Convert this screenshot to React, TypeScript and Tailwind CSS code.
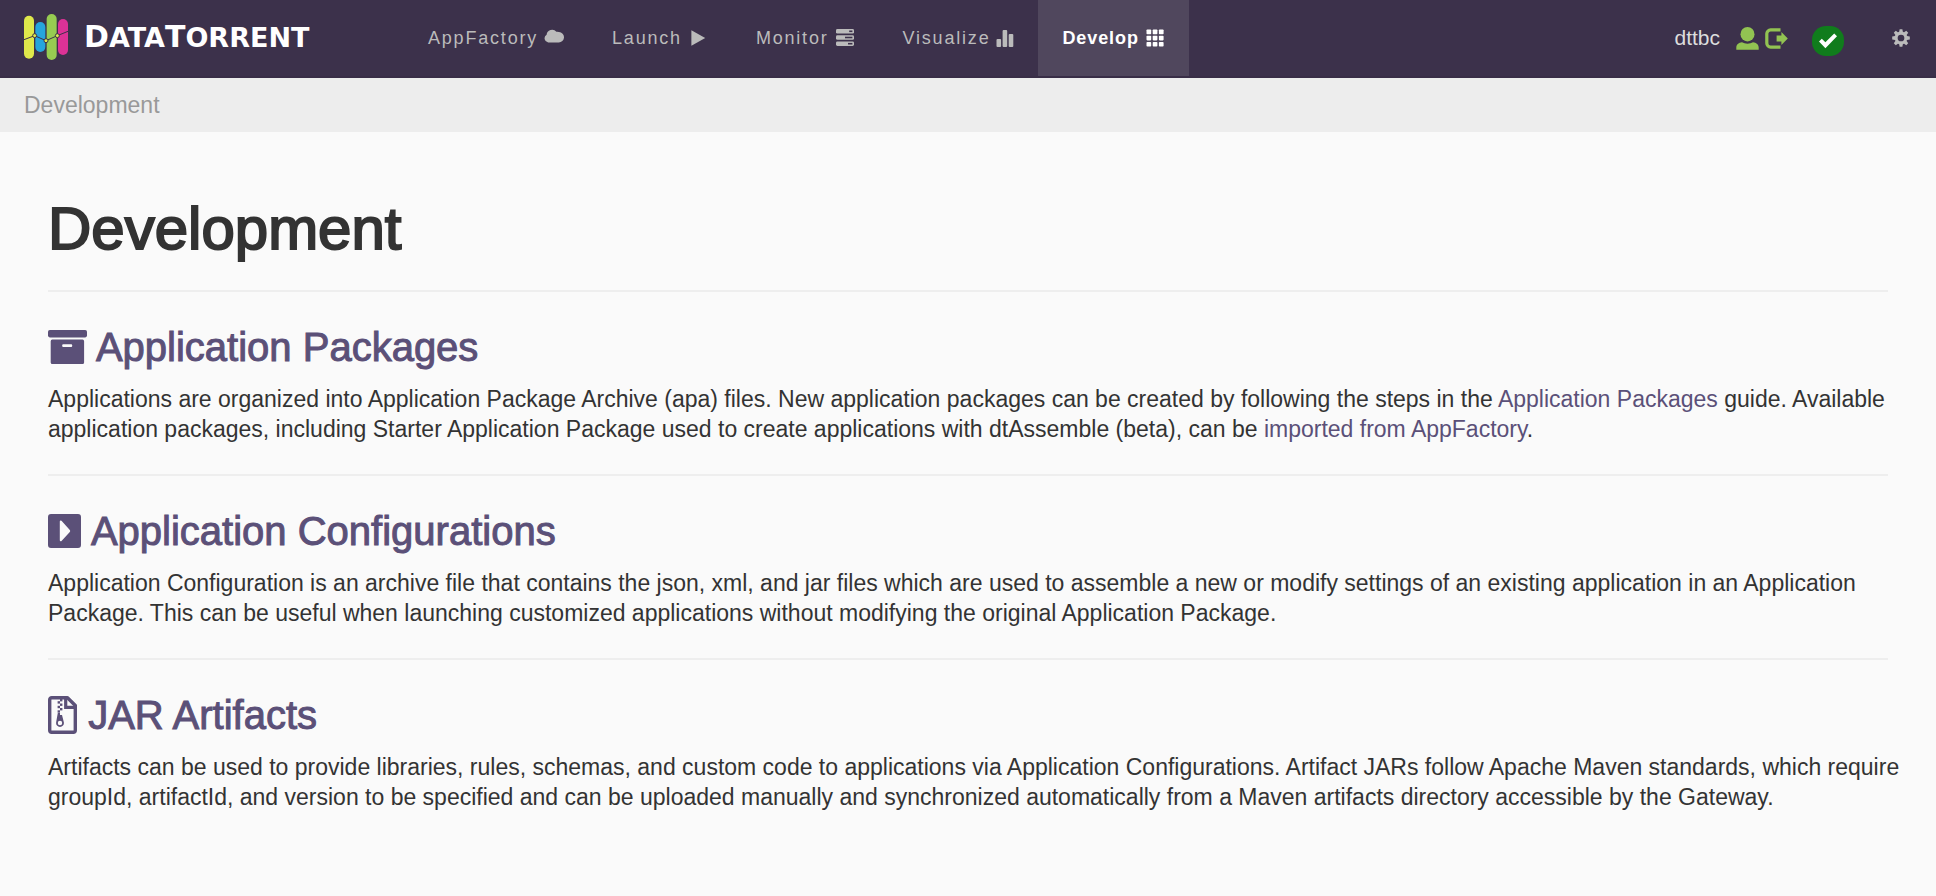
import type { ReactNode } from "react";

function LogoMark() {
  return (
    <svg viewBox="0 0 132 138" className="h-[46px] w-11 shrink-0" aria-hidden="true">
      <rect x="0" y="5" width="30" height="129" rx="15" fill="#dfe84b" />
      <rect x="34" y="24" width="30" height="90" rx="15" fill="#26a5dc" />
      <rect x="68" y="0" width="30" height="138" rx="15" fill="#97cc51" />
      <rect x="102" y="15" width="30" height="108" rx="15" fill="#dc3296" />
      <path d="M0 77 L32 65 L66 80 L100 65 L132 52" fill="none" stroke="#3c314b" strokeWidth="3" />
      <g fill="#dfe84b" stroke="#3c314b" strokeWidth="3">
        <circle cx="32" cy="65" r="6" />
        <circle cx="66" cy="80" r="6" />
        <circle cx="100" cy="65" r="6" />
      </g>
    </svg>
  );
}

function CloudIcon() {
  return (
    <svg viewBox="0 0 20 18" className="h-[18px] w-5" fill="currentColor" aria-hidden="true">
      <path d="M4.2 13.4A4.1 4.1 0 0 1 2.6 5.8A5.6 5.6 0 0 1 12.4 2.7A5.2 5.2 0 0 1 15 3A5.2 5.2 0 0 1 14.6 13.4Z" />
    </svg>
  );
}

function PlayIcon() {
  return (
    <svg viewBox="0 0 20 18" className="h-[18px] w-5" fill="currentColor" aria-hidden="true">
      <path d="M3.4 1.2 L17.2 9 L3.4 16.8Z" />
    </svg>
  );
}

function ServersIcon() {
  return (
    <svg viewBox="0 0 20 18" className="h-[18px] w-5" aria-hidden="true">
      <g fill="currentColor">
        <rect x="1" y="0" width="18" height="4.6" rx="1.4" />
        <rect x="1" y="6.2" width="18" height="4.6" rx="1.4" />
        <rect x="1" y="12.4" width="18" height="4.6" rx="1.4" />
      </g>
      <g fill="#3c314b">
        <rect x="14.2" y="1.5" width="3.2" height="1.6" />
        <rect x="10" y="7.7" width="7.4" height="1.6" />
        <rect x="13" y="13.9" width="4.4" height="1.6" />
      </g>
    </svg>
  );
}

function BarsIcon() {
  return (
    <svg viewBox="1 0 18 18" className="h-[18px] w-[18px]" fill="currentColor" aria-hidden="true">
      <rect x="1.5" y="10" width="4.6" height="8" rx="1" />
      <rect x="7.6" y="1" width="4.6" height="17" rx="1" />
      <rect x="13.7" y="5" width="4.6" height="13" rx="1" />
    </svg>
  );
}

function GridIcon() {
  const steps = [0.5, 6.7, 12.9];
  return (
    <svg viewBox="0 0 20 18" className="h-[18px] w-5" fill="currentColor" aria-hidden="true">
      {steps.map((y) =>
        steps.map((x) => <rect key={`${x}-${y}`} x={x + 1} y={y} width="4.7" height="4.7" rx="0.8" />),
      )}
    </svg>
  );
}

function UserIcon() {
  return (
    <svg viewBox="0 0 23 23" className="h-[23px] w-[23px]" fill="currentColor" aria-hidden="true">
      <ellipse cx="11.5" cy="7.2" rx="7" ry="7.2" />
      <path d="M0.3 22.8V20.5C0.3 17.6 2.8 15.6 6 15.3C9 17.2 14 17.2 17 15.3C20.2 15.6 22.7 17.6 22.7 20.5V22.8Z" />
    </svg>
  );
}

function SignOutIcon() {
  return (
    <svg viewBox="0 0 23 21" className="h-[21px] w-[23px]" aria-hidden="true">
      <path d="M15.5 1.9H5.6A3.8 3.8 0 0 0 1.8 5.7V15.3A3.8 3.8 0 0 0 5.6 19.1H15.5" fill="none" stroke="currentColor" strokeWidth="3.2" />
      <path d="M11.6 7.6H16.4V4L22.8 10.5L16.4 17V13.4H11.6Z" fill="currentColor" />
    </svg>
  );
}

function CogIcon() {
  return (
    <svg viewBox="0 0 18 18" className="h-[18px] w-[18px]" aria-hidden="true">
      <circle cx="9" cy="9" r="4.9" fill="none" stroke="currentColor" strokeWidth="3.1" />
      <g fill="currentColor">
        {[0, 45, 90, 135].map((angle) => (
          <g key={angle} transform={`rotate(${angle} 9 9)`}>
            <path d="M7.6 0.2H10.4L10.9 3.2H7.1Z" />
            <path d="M7.6 17.8H10.4L10.9 14.8H7.1Z" />
          </g>
        ))}
      </g>
    </svg>
  );
}

function ArchiveIcon() {
  return (
    <svg viewBox="0 0 39 34" className="inline-block h-[34px] w-[39px] align-[-3px]" fill="currentColor" aria-hidden="true">
      <rect x="0" y="0" width="39" height="7.4" rx="1.8" />
      <path
        fillRule="evenodd"
        d="M4.3 9.6H34.5A1.6 1.6 0 0 1 36.1 11.2V32.4A1.6 1.6 0 0 1 34.5 34H4.3A1.6 1.6 0 0 1 2.7 32.4V11.2A1.6 1.6 0 0 1 4.3 9.6ZM15.2 14.3A1 1 0 0 0 14.2 15.3V15.9A1 1 0 0 0 15.2 16.9H23.2A1 1 0 0 0 24.2 15.9V15.3A1 1 0 0 0 23.2 14.3Z"
      />
    </svg>
  );
}

function CaretSquareIcon() {
  return (
    <svg viewBox="0 0 34 34" className="inline-block h-[34px] w-[34px] align-[-3px]" fill="currentColor" aria-hidden="true">
      <path
        fillRule="evenodd"
        d="M3 0H30A3 3 0 0 1 33 3V31A3 3 0 0 1 30 34H3A3 3 0 0 1 0 31V3A3 3 0 0 1 3 0ZM11.8 7.6V26.2A1.1 1.1 0 0 0 13.5 27.1L21.8 17.9A1.4 1.4 0 0 0 21.8 16L13.5 6.8A1.1 1.1 0 0 0 11.8 7.6Z"
      />
    </svg>
  );
}

function ZipFileIcon() {
  return (
    <svg viewBox="0 0 29 38" className="inline-block h-[38px] w-[29px] align-[-5px]" aria-hidden="true">
      <path d="M4 1.7H19.5L27.3 9.5V34.3A2 2 0 0 1 25.3 36.3H3.7A2 2 0 0 1 1.7 34.3V3.7A2 2 0 0 1 3.7 1.7Z" fill="none" stroke="currentColor" strokeWidth="3.4" strokeLinejoin="round" />
      <path d="M17.7 2V11.3H27" fill="none" stroke="currentColor" strokeWidth="3.2" />
      <g fill="currentColor">
        <rect x="12" y="3" width="2.4" height="2.4" />
        <rect x="9.6" y="5.2" width="2.4" height="2.4" />
        <rect x="12" y="7.5" width="2.4" height="2.4" />
        <rect x="9.6" y="9.8" width="2.4" height="2.4" />
        <rect x="12" y="12" width="2.4" height="2.4" />
        <rect x="9.6" y="14.3" width="2.4" height="2.4" />
        <path
          fillRule="evenodd"
          d="M9.8 17H12V19H14L15.9 26.4A4 4 0 0 1 12 31A4 4 0 0 1 8.1 26.4ZM12 24.8A2.2 2.2 0 1 0 12 29.2A2.2 2.2 0 1 0 12 24.8Z"
        />
      </g>
    </svg>
  );
}

const navItems: { label: string; icon: ReactNode; active?: boolean }[] = [
  { label: "AppFactory", icon: <CloudIcon /> },
  { label: "Launch", icon: <PlayIcon /> },
  { label: "Monitor", icon: <ServersIcon /> },
  { label: "Visualize", icon: <BarsIcon /> },
  { label: "Develop", icon: <GridIcon />, active: true },
];

function Header() {
  return (
    <header className="flex h-[78px] items-start border-b-2 border-[#392e47] bg-[#3c314b]">
      <a href="#home" className="flex h-[74px] w-[404px] shrink-0 items-center gap-4 pl-6 text-white">
        <LogoMark />
        <span className="font-['DejaVu_Sans',sans-serif] text-[27px] leading-none font-bold whitespace-nowrap">
          <span className="text-[30px]">D</span>ATA<span className="text-[30px]">T</span>ORRENT
        </span>
      </a>
      <nav className="flex" aria-label="Main">
        {navItems.map(({ label, icon, active }) => (
          <a
            key={label}
            href={`#${label.toLowerCase()}`}
            aria-current={active ? "page" : undefined}
            className={
              active
                ? "flex h-19 items-center gap-1.5 bg-[#50475d] px-6 text-lg font-bold tracking-wider text-white"
                : "flex h-19 items-center gap-1.5 px-6 text-lg tracking-widest text-[#bbb]"
            }
          >
            {label}
            {icon}
          </a>
        ))}
      </nav>
      <div className="ml-auto flex h-19 items-center pr-[26px] text-[#92c352]">
        <span className="mr-4 text-[21px] text-[#ddd]">dttbc</span>
        <a href="#profile" aria-label="User profile" className="mr-1.5">
          <UserIcon />
        </a>
        <button type="button" aria-label="Sign out" className="mr-6">
          <SignOutIcon />
        </button>
        <button
          type="button"
          aria-label="System status: OK"
          className="mt-1.5 mr-12 flex h-[30px] w-8 items-center justify-center rounded-[14px] bg-[#107c1c] text-white"
        >
          <svg viewBox="0 0 18 16" className="h-4 w-[18px]" fill="currentColor" aria-hidden="true">
            <path d="M0 8.6L2.8 5.8L6.4 9.2L15.2 0.4L18 3.2L6.4 15.2Z" />
          </svg>
        </button>
        <button type="button" aria-label="Settings" className="text-[#bbb]">
          <CogIcon />
        </button>
      </div>
    </header>
  );
}

function Section({ icon, title, children }: { icon: ReactNode; title: string; children: ReactNode }) {
  return (
    <section className="border-t-2 border-[#eee] pt-[33px] pb-[30px]">
      <h2 className="mb-[15px] h-11 text-[40px] leading-11 text-[#5b5078] [-webkit-text-stroke:1px_#5b5078]">
        <a href={`#${title.toLowerCase().replace(/ /g, "-")}`}>
          {icon} {title}
        </a>
      </h2>
      <p className="-mr-4 text-[23px] leading-[30px]">{children}</p>
    </section>
  );
}

export default function App() {
  return (
    <div className="min-h-screen bg-[#fafafa] font-['Liberation_Sans',Arial,sans-serif] text-[#333]">
      <Header />
      <nav aria-label="Breadcrumb" className="flex h-[54px] items-center bg-[#ededed] px-6 text-[23px] text-[#999]">
        Development
      </nav>
      <main className="px-12 pt-16">
        <h1 className="mb-7 text-[60px] leading-[66px] [-webkit-text-stroke:2px_#333]">Development</h1>
        <Section icon={<ArchiveIcon />} title="Application Packages">
          Applications are organized into Application Package Archive (apa) files. New application packages can be
          created by following the steps in the{" "}
          <a href="#packages-guide" className="text-[#5b5078]">
            Application Packages
          </a>{" "}
          guide. Available application packages, including Starter Application Package used to create applications with
          dtAssemble (beta), can be{" "}
          <a href="#appfactory" className="text-[#5b5078]">
            imported from AppFactory
          </a>
          .
        </Section>
        <Section icon={<CaretSquareIcon />} title="Application Configurations">
          Application Configuration is an archive file that contains the json, xml, and jar files which are used to
          assemble a new or modify settings of an existing application in an Application Package. This can be useful
          when launching customized applications without modifying the original Application Package.
        </Section>
        <Section icon={<ZipFileIcon />} title="JAR Artifacts">
          Artifacts can be used to provide libraries, rules, schemas, and custom code to applications via Application
          Configurations. Artifact JARs follow Apache Maven standards, which require groupId, artifactId, and version to
          be specified and can be uploaded manually and synchronized automatically from a Maven artifacts directory
          accessible by the Gateway.
        </Section>
      </main>
    </div>
  );
}
